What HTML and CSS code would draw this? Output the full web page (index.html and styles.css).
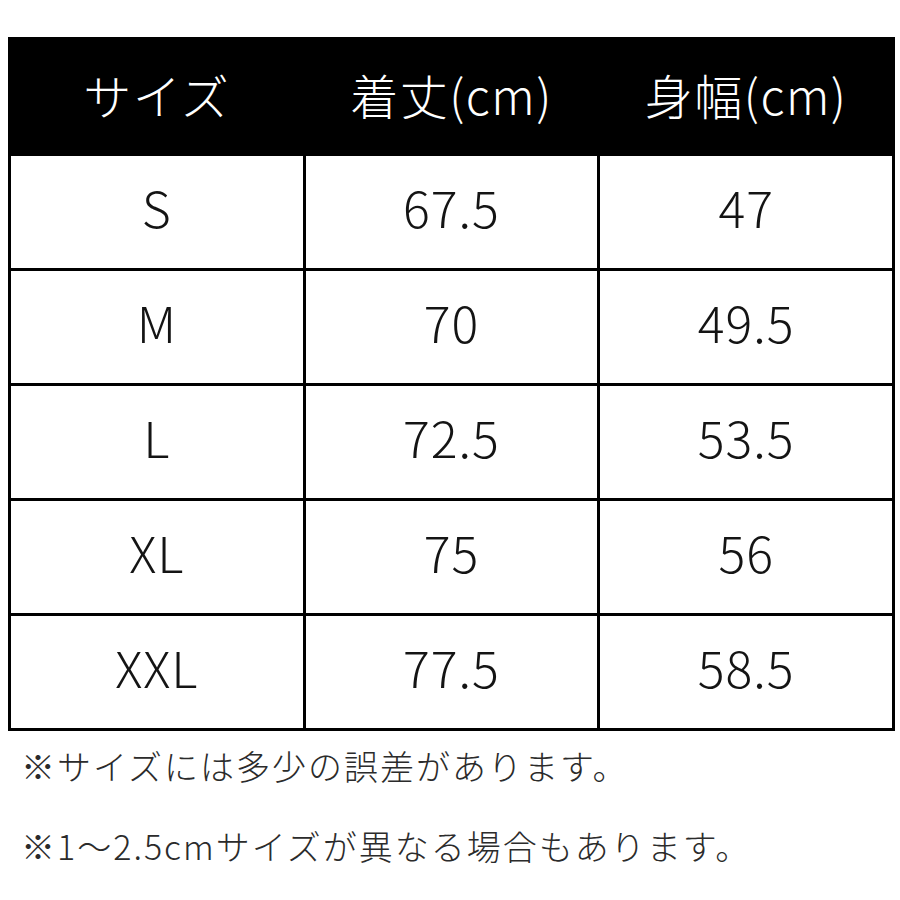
FILE: index.html
```html
<!DOCTYPE html>
<html lang="ja">
<head>
<meta charset="utf-8">
<title>サイズ表</title>
<link rel="stylesheet" href="styles.css">
</head>
<body>
<div class="page">
  <div class="table">
    <div class="head">サイズ</div>
    <div class="head">着丈(cm)</div>
    <div class="head">身幅(cm)</div>

    <div class="cell">S</div>
    <div class="cell">67.5</div>
    <div class="cell">47</div>

    <div class="cell">M</div>
    <div class="cell">70</div>
    <div class="cell">49.5</div>

    <div class="cell">L</div>
    <div class="cell">72.5</div>
    <div class="cell">53.5</div>

    <div class="cell">XL</div>
    <div class="cell">75</div>
    <div class="cell">56</div>

    <div class="cell">XXL</div>
    <div class="cell">77.5</div>
    <div class="cell">58.5</div>
  </div>
  <div class="notes">
    <p class="note">※サイズには多少の誤差があります。</p>
    <p class="note">※1〜2.5cmサイズが異なる場合もあります。</p>
  </div>
</div>
</body>
</html>
```

FILE: styles.css
```css
html, body {
  margin: 0;
  padding: 0;
  background: #ffffff;
}

.page {
  padding: 37px 5px 0 8px;
  width: 887px;
}

.table {
  display: grid;
  grid-template-columns: 1fr 1fr 1fr;
  grid-template-rows: 113px repeat(5, 112px);
  gap: 3px;
  padding: 3px;
  background: #000000;
}

.head {
  background: #000000;
  color: #ffffff;
  display: flex;
  align-items: center;
  justify-content: center;
  font-family: "Noto Sans CJK JP", "Noto Sans", sans-serif;
  font-weight: 300;
  font-size: 48px;
  letter-spacing: 1.5px;
  padding-bottom: 6px;
}

.cell {
  background: #ffffff;
  color: #141414;
  display: flex;
  align-items: center;
  justify-content: center;
  font-family: "Noto Sans CJK JP", "Noto Sans", sans-serif;
  font-weight: 300;
  font-size: 50px;
  letter-spacing: 1px;
  padding-bottom: 12px;
}

.notes {
  display: flex;
  flex-direction: column;
  gap: 32px;
  margin-top: 11px;
  padding-left: 13px;
}

.note {
  margin: 0;
  font-family: "Noto Sans CJK JP", "Noto Sans", sans-serif;
  font-weight: 300;
  font-size: 34px;
  line-height: 48px;
  letter-spacing: 2px;
  color: #2b2b2b;
  white-space: nowrap;
}
```
